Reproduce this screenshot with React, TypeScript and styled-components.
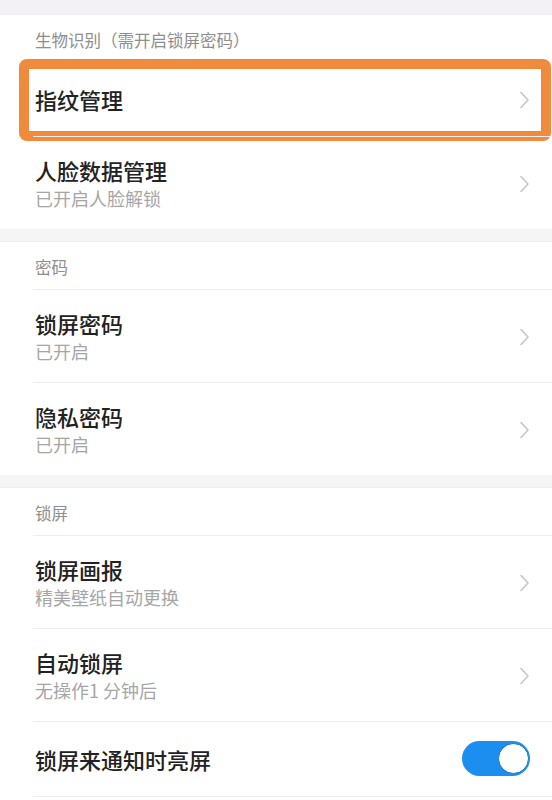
import styled, { createGlobalStyle } from "styled-components";

const GlobalStyle = createGlobalStyle`
  body {
    margin: 0;
    background: #ffffff;
    font-family: "Noto Sans CJK SC", "Noto Sans", sans-serif;
  }
`;

type Item = {
  title: string;
  sub?: string;
  toggle?: boolean;
  highlight?: boolean;
};

const sections: { header: string; items: Item[] }[] = [
  {
    header: "生物识别（需开启锁屏密码）",
    items: [
      { title: "指纹管理", highlight: true },
      { title: "人脸数据管理", sub: "已开启人脸解锁" },
    ],
  },
  {
    header: "密码",
    items: [
      { title: "锁屏密码", sub: "已开启" },
      { title: "隐私密码", sub: "已开启" },
    ],
  },
  {
    header: "锁屏",
    items: [
      { title: "锁屏画报", sub: "精美壁纸自动更换" },
      { title: "自动锁屏", sub: "无操作1 分钟后" },
      { title: "锁屏来通知时亮屏", toggle: true },
    ],
  },
];

const Chevron = () => (
  <ArrowBox>
    <svg width="11" height="18" viewBox="0 0 11 18" fill="none">
      <path d="M2 1.5 L9 9 L2 16.5" stroke="#c6c6c6" strokeWidth="1.6" strokeLinecap="round" strokeLinejoin="round" />
    </svg>
  </ArrowBox>
);

const App = () => {
  return (
    <Page>
      <GlobalStyle />
      <Band $top />
      {sections.map((section, si) => (
        <div key={section.header}>
          {si > 0 && <Band />}
          <Section>
            <Header>{section.header}</Header>
            {section.items.map((item) => (
              <Row key={item.title} $tall={!!item.sub} $toggle={!!item.toggle}>
                <TextBox>
                  <Title>{item.title}</Title>
                  {item.sub && <Sub>{item.sub}</Sub>}
                </TextBox>
                {item.toggle ? (
                  <Switch>
                    <Knob />
                  </Switch>
                ) : (
                  <Chevron />
                )}
                {item.highlight && <Highlight />}
              </Row>
            ))}
            {si === sections.length - 1 && <Divider />}
          </Section>
        </div>
      ))}
    </Page>
  );
};

const Page = styled.div`
  width: 552px;
  height: 800px;
  overflow: hidden;
  background: #ffffff;
`;

const Band = styled.div<{ $top?: boolean }>`
  height: ${(p) => (p.$top ? "15px" : "13px")};
  background: ${(p) => (p.$top ? "#f3f1f6" : "#f5f5f6")};
  border-bottom: 1px solid #efeef1;
  box-sizing: border-box;
`;

const Section = styled.div`
  background: #ffffff;
`;

const Header = styled.div`
  height: 47px;
  display: flex;
  align-items: center;
  padding: 2px 0 0 35px;
  box-sizing: border-box;
  font-size: 16.5px;
  color: #8e8e8e;
`;

const Row = styled.div<{ $tall: boolean; $toggle: boolean }>`
  position: relative;
  display: flex;
  align-items: center;
  justify-content: space-between;
  height: ${(p) => (p.$tall ? "93px" : p.$toggle ? "75px" : "74px")};
  padding: 0 22px 0 35px;
  box-sizing: border-box;

  &::before {
    content: "";
    position: absolute;
    top: 0;
    left: 33px;
    right: 0;
    height: 1px;
    background: #eeeeee;
  }
`;

const TextBox = styled.div`
  display: flex;
  flex-direction: column;
`;

const Title = styled.div`
  font-size: 22px;
  line-height: 30px;
  font-weight: 500;
  color: #222222;
`;

const Sub = styled.div`
  font-size: 18px;
  line-height: 26px;
  color: #a6a6a6;
`;

const ArrowBox = styled.div`
  display: flex;
  align-items: center;
  margin-top: 2px;
`;

const Switch = styled.div`
  width: 68px;
  height: 35px;
  border-radius: 18px;
  background: #1b8ef0;
  display: flex;
  align-items: center;
  justify-content: flex-end;
  padding: 0 1px;
  box-sizing: border-box;
`;

const Knob = styled.div`
  width: 31px;
  height: 31px;
  border-radius: 50%;
  background: #ffffff;
  border: 1.5px solid #1676c8;
  box-sizing: border-box;
`;

const Highlight = styled.div`
  position: absolute;
  top: -3px;
  bottom: -5px;
  left: 19px;
  right: 1px;
  border: 10px solid #f08b3e;
  border-radius: 8px;
  pointer-events: none;
`;

const Divider = styled.div`
  height: 1px;
  margin-left: 33px;
  background: #eeeeee;
`;

export default App;
